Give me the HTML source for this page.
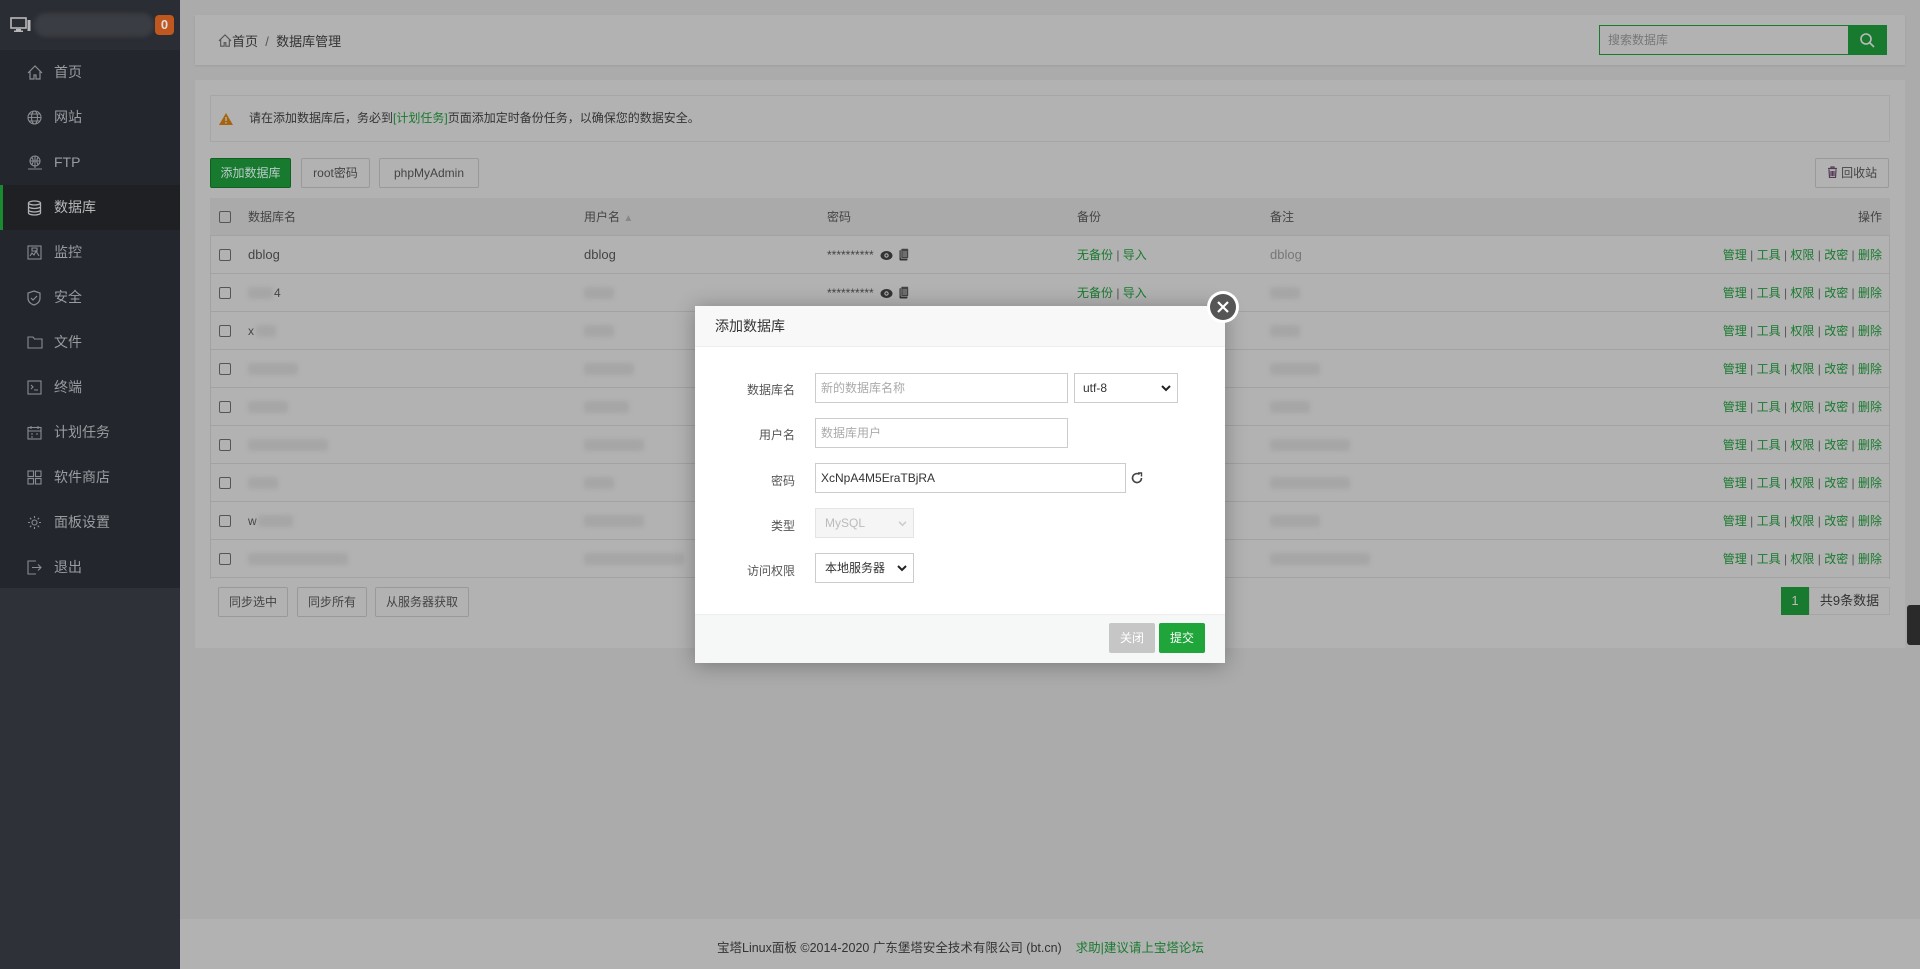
<!DOCTYPE html>
<html><head><meta charset="utf-8"><style>
*{box-sizing:border-box;margin:0;padding:0}
body{width:1920px;height:969px;overflow:hidden;background:#ababab;font-family:"Liberation Sans","Noto Sans CJK SC",sans-serif;font-size:12px;color:#444;position:relative}
.abs{position:absolute}
.side{left:0;top:0;width:180px;height:969px;background:#2e3137}
.logo{left:0;top:0;width:180px;height:50px;background:#2a2d33}
.menu{left:0;top:50px;width:180px;height:538px;background:#23262d}
.mi{position:absolute;left:0;width:180px;height:45px;color:#9a9ca0;font-size:14px;line-height:45px;padding-left:54px}
.mi svg{position:absolute;left:27px;top:15px}
.mi.act{background:#1e2024;color:#b8b8b8;border-left:3px solid #1a8a30;padding-left:51px}
.mi.act svg{left:24px}
.card{background:#b2b2b2}
.btn{position:absolute;border:1px solid #999;border-radius:2px;color:#444;text-align:center;font-size:12px;background:#b2b2b2}
.row{position:absolute;left:210px;width:1680px;height:38px;border-bottom:1px solid #a2a2a2;line-height:38px;font-size:12px}
.cb{position:absolute;left:9px;top:13px;width:12px;height:12px;border:1px solid #555;border-radius:2px}
.g{color:#187a2e}
.blur{position:absolute;top:13px;height:12px;background:#a6a6a6;border-radius:3px;filter:blur(2px)}
.ops{position:absolute;right:8px;top:0;color:#187a2e}
.ops i{font-style:normal;color:#555}
.lbl{position:absolute;width:100px;text-align:right;font-size:12px;color:#555}
.inp{position:absolute;height:30px;border:1px solid #ccc;background:#fff;font-size:12px;line-height:28px;padding-left:5px;color:#333}
.ph{color:#aaa}
.ic{display:inline-block;vertical-align:-2px;margin-left:6px}
</style></head><body>
<div class="abs side"></div>
<div class="abs logo">
<svg class="abs" style="left:10px;top:17px" width="22" height="16" viewBox="0 0 22 16"><rect x="1" y="1" width="15" height="10" fill="none" stroke="#b8b8b8" stroke-width="1.6"/><rect x="6" y="12" width="5" height="1.5" fill="#b8b8b8"/><rect x="4" y="13.5" width="9" height="1.5" fill="#b8b8b8"/><rect x="17.5" y="3" width="3" height="11" fill="#b8b8b8"/></svg>
<div class="abs" style="left:34px;top:13px;width:120px;height:24px;border-radius:12px;background:#3a3d43;filter:blur(2px)"></div>
<div class="abs" style="left:155px;top:15px;width:19px;height:20px;border-radius:4px;background:#c0571e;color:#ddd;font-weight:bold;font-size:13px;text-align:center;line-height:20px">0</div>
</div>
<div class="abs menu"></div>
<div class="mi" style="top:50px"><svg width="16" height="15" viewBox="0 0 16 15" fill="none" stroke="#8a8c90" stroke-width="1.2"><path d="M1 8L8 1l7 7M3 6.5V14h4v-4h2v4h4V6.5"/></svg>首页</div>
<div class="mi" style="top:95px"><svg width="15" height="15" viewBox="0 0 15 15" fill="none" stroke="#8a8c90" stroke-width="1.1"><circle cx="7.5" cy="7.5" r="6.5"/><ellipse cx="7.5" cy="7.5" rx="3" ry="6.5"/><path d="M1 7.5h13M2 4h11M2 11h11"/></svg>网站</div>
<div class="mi" style="top:140px"><svg width="16" height="16" viewBox="0 0 16 16" fill="none" stroke="#8a8c90" stroke-width="1.1"><circle cx="8" cy="6" r="5"/><path d="M3 6h10M8 1v10M5 2.5c1.5 2 1.5 5 0 7M11 2.5c-1.5 2-1.5 5 0 7M8 11v2M1 14h14"/></svg>FTP</div>
<div class="mi act" style="top:185px"><svg width="15" height="16" viewBox="0 0 15 16" fill="none" stroke="#b0b0b0" stroke-width="1.3"><ellipse cx="7.5" cy="3" rx="6" ry="2"/><path d="M1.5 3v10c0 1.1 2.7 2 6 2s6-.9 6-2V3M1.5 6.5c0 1.1 2.7 2 6 2s6-.9 6-2M1.5 10c0 1.1 2.7 2 6 2s6-.9 6-2"/></svg>数据库</div>
<div class="mi" style="top:230px"><svg width="15" height="15" viewBox="0 0 15 15" fill="none" stroke="#8a8c90" stroke-width="1.1"><rect x="1" y="1" width="13" height="13"/><path d="M3 11l2-3 2 2 2-4 3 5M5 3h5v3H5z"/></svg>监控</div>
<div class="mi" style="top:275px"><svg width="14" height="16" viewBox="0 0 14 16" fill="none" stroke="#8a8c90" stroke-width="1.2"><path d="M7 1l6 2v5c0 4-3 6-6 7-3-1-6-3-6-7V3z"/><path d="M4 8l2 2 4-4"/></svg>安全</div>
<div class="mi" style="top:320px"><svg width="16" height="14" viewBox="0 0 16 14" fill="none" stroke="#8a8c90" stroke-width="1.1"><path d="M1 2h5l1.5 2H15v9H1z"/></svg>文件</div>
<div class="mi" style="top:365px"><svg width="15" height="15" viewBox="0 0 15 15" fill="none" stroke="#8a8c90" stroke-width="1.1"><rect x="1" y="1" width="13" height="13"/><path d="M4 5l2 2-2 2M7 10h4"/></svg>终端</div>
<div class="mi" style="top:410px"><svg width="15" height="15" viewBox="0 0 15 15" fill="none" stroke="#8a8c90" stroke-width="1.1"><rect x="1" y="2.5" width="13" height="11.5"/><path d="M4 1v3M11 1v3M1 6h13M4 9h2M9 9h2M4 12h2"/></svg>计划任务</div>
<div class="mi" style="top:455px"><svg width="15" height="15" viewBox="0 0 15 15" fill="none" stroke="#8a8c90" stroke-width="1.1"><rect x="1" y="1" width="5.5" height="5.5"/><rect x="8.5" y="1" width="5.5" height="5.5"/><rect x="1" y="8.5" width="5.5" height="5.5"/><rect x="8.5" y="8.5" width="5.5" height="5.5"/></svg>软件商店</div>
<div class="mi" style="top:500px"><svg width="15" height="15" viewBox="0 0 15 15" fill="none" stroke="#8a8c90" stroke-width="1.1"><circle cx="7.5" cy="7.5" r="2.5"/><path d="M7.5 1v2M7.5 12v2M1 7.5h2M12 7.5h2M2.9 2.9l1.4 1.4M10.7 10.7l1.4 1.4M2.9 12.1l1.4-1.4M10.7 4.3l1.4-1.4"/></svg>面板设置</div>
<div class="mi" style="top:545px"><svg width="15" height="15" viewBox="0 0 15 15" fill="none" stroke="#8a8c90" stroke-width="1.1"><path d="M9 1H1v13h8M5 7.5h9M11 4.5l3 3-3 3"/></svg>退出</div>

<div class="abs card" style="left:195px;top:15px;width:1710px;height:50px;box-shadow:0 1px 2px rgba(0,0,0,.08)"></div>
<div class="abs" style="left:218px;top:31px;font-size:13px;color:#333"><svg width="14" height="13" viewBox="0 0 16 15" fill="none" stroke="#555" stroke-width="1.3" style="vertical-align:-1px"><path d="M1 8L8 1l7 7M3 6.5V14h4v-4h2v4h4V6.5"/></svg>首页 &nbsp;<span style="color:#555">/</span>&nbsp; 数据库管理</div>
<div class="abs" style="left:1599px;top:25px;width:250px;height:30px;border:1px solid #187a2e;background:#b2b2b2;color:#777;line-height:28px;padding-left:8px;font-size:12px">搜索数据库</div>
<div class="abs" style="left:1848px;top:25px;width:39px;height:30px;background:#187a2e"><svg class="abs" style="left:12px;top:8px" width="15" height="15" viewBox="0 0 15 15" fill="none" stroke="#bbb" stroke-width="1.6"><circle cx="6" cy="6" r="5"/><path d="M10 10l4 4"/></svg></div>

<div class="abs card" style="left:195px;top:80px;width:1710px;height:568px"></div>
<div class="abs" style="left:210px;top:95px;width:1680px;height:47px;border:1px solid #a6a6a6;line-height:45px;padding-left:38px;color:#333">请在添加数据库后，务必到<span class="g">[计划任务]</span>页面添加定时备份任务，以确保您的数据安全。</div>
<svg class="abs" style="left:219px;top:113px" width="14" height="12" viewBox="0 0 14 12"><path d="M7 0L14 12H0z" fill="#a6650c"/><rect x="6.3" y="4" width="1.4" height="4" fill="#b2b2b2"/><rect x="6.3" y="9" width="1.4" height="1.4" fill="#b2b2b2"/></svg>
<div class="btn" style="left:210px;top:158px;width:81px;height:30px;line-height:28px;background:#187a2e;border-color:#106020;color:#bcc">添加数据库</div>
<div class="btn" style="left:301px;top:158px;width:69px;height:30px;line-height:28px">root密码</div>
<div class="btn" style="left:379px;top:158px;width:100px;height:30px;line-height:28px">phpMyAdmin</div>
<div class="btn" style="left:1815px;top:158px;width:74px;height:30px;line-height:28px"><svg width="11" height="12" viewBox="0 0 11 12" style="vertical-align:-1px" fill="none" stroke="#553a55" stroke-width="1.2"><path d="M1 2.5h9M4 2.5V1h3v1.5M2 3.5l.5 8h6l.5-8M4 5v5M5.5 5v5M7 5v5"/></svg> 回收站</div>

<div class="abs" style="left:210px;top:198px;width:1680px;height:381px;border:1px solid #a2a2a2;border-bottom:none"></div>
<div class="row" style="top:198px;background:#aaaaaa;color:#444"><div class="cb"></div><span class="abs" style="left:38px">数据库名</span><span class="abs" style="left:374px">用户名 <span style="color:#888;font-size:10px">▲</span></span><span class="abs" style="left:617px">密码</span><span class="abs" style="left:867px">备份</span><span class="abs" style="left:1060px">备注</span><span class="abs" style="right:8px">操作</span></div>
<div class="row" style="top:236px"><div class="cb"></div><span class="abs" style="left:38px;font-size:13px">dblog</span><span class="abs" style="left:374px;font-size:13px">dblog</span><span class="abs" style="left:617px">**********<svg class="ic" width="13" height="11" viewBox="0 0 13 11"><ellipse cx="6.5" cy="5.5" rx="6" ry="4.5" fill="#333"/><circle cx="6.5" cy="5.5" r="2.2" fill="#b2b2b2"/><circle cx="6.5" cy="5.5" r="1.1" fill="#333"/></svg><svg class="ic" width="10" height="13" viewBox="0 0 10 13"><rect x="0.5" y="2" width="8" height="10.5" rx="1" fill="#333"/><rect x="2" y="0.5" width="7.5" height="10" rx="1" fill="#444" stroke="#b2b2b2" stroke-width=".6"/><path d="M3.5 4h4.5M3.5 6h4.5M3.5 8h4.5" stroke="#b2b2b2" stroke-width=".8"/></svg></span><span class="abs g" style="left:867px">无备份 <i style="font-style:normal;color:#555">|</i> 导入</span><span class="abs" style="left:1060px;color:#777;font-size:13px">dblog</span><span class="ops">管理 <i>|</i> 工具 <i>|</i> 权限 <i>|</i> 改密 <i>|</i> 删除</span></div>
<div class="row" style="top:274px"><div class="cb"></div><div class="blur" style="left:38px;width:25px"></div><span class="abs" style="left:64px">4</span><div class="blur" style="left:374px;width:30px"></div><span class="abs" style="left:617px">**********<svg class="ic" width="13" height="11" viewBox="0 0 13 11"><ellipse cx="6.5" cy="5.5" rx="6" ry="4.5" fill="#333"/><circle cx="6.5" cy="5.5" r="2.2" fill="#b2b2b2"/><circle cx="6.5" cy="5.5" r="1.1" fill="#333"/></svg><svg class="ic" width="10" height="13" viewBox="0 0 10 13"><rect x="0.5" y="2" width="8" height="10.5" rx="1" fill="#333"/><rect x="2" y="0.5" width="7.5" height="10" rx="1" fill="#444" stroke="#b2b2b2" stroke-width=".6"/><path d="M3.5 4h4.5M3.5 6h4.5M3.5 8h4.5" stroke="#b2b2b2" stroke-width=".8"/></svg></span><span class="abs g" style="left:867px">无备份 <i style="font-style:normal;color:#555">|</i> 导入</span><div class="blur" style="left:1060px;width:30px"></div><span class="ops">管理 <i>|</i> 工具 <i>|</i> 权限 <i>|</i> 改密 <i>|</i> 删除</span></div>
<div class="row" style="top:312px"><div class="cb"></div><span class="abs" style="left:38px">x</span><div class="blur" style="left:46px;width:20px"></div><div class="blur" style="left:374px;width:30px"></div><div class="blur" style="left:1060px;width:30px"></div><span class="ops">管理 <i>|</i> 工具 <i>|</i> 权限 <i>|</i> 改密 <i>|</i> 删除</span></div>
<div class="row" style="top:350px"><div class="cb"></div><div class="blur" style="left:38px;width:50px"></div><div class="blur" style="left:374px;width:50px"></div><div class="blur" style="left:1060px;width:50px"></div><span class="ops">管理 <i>|</i> 工具 <i>|</i> 权限 <i>|</i> 改密 <i>|</i> 删除</span></div>
<div class="row" style="top:388px"><div class="cb"></div><div class="blur" style="left:38px;width:40px"></div><div class="blur" style="left:374px;width:45px"></div><div class="blur" style="left:1060px;width:40px"></div><span class="ops">管理 <i>|</i> 工具 <i>|</i> 权限 <i>|</i> 改密 <i>|</i> 删除</span></div>
<div class="row" style="top:426px"><div class="cb"></div><div class="blur" style="left:38px;width:80px"></div><div class="blur" style="left:374px;width:60px"></div><div class="blur" style="left:1060px;width:80px"></div><span class="ops">管理 <i>|</i> 工具 <i>|</i> 权限 <i>|</i> 改密 <i>|</i> 删除</span></div>
<div class="row" style="top:464px"><div class="cb"></div><div class="blur" style="left:38px;width:30px"></div><div class="blur" style="left:374px;width:30px"></div><div class="blur" style="left:1060px;width:80px"></div><span class="ops">管理 <i>|</i> 工具 <i>|</i> 权限 <i>|</i> 改密 <i>|</i> 删除</span></div>
<div class="row" style="top:502px"><div class="cb"></div><span class="abs" style="left:38px">w</span><div class="blur" style="left:48px;width:35px"></div><div class="blur" style="left:374px;width:60px"></div><div class="blur" style="left:1060px;width:50px"></div><span class="ops">管理 <i>|</i> 工具 <i>|</i> 权限 <i>|</i> 改密 <i>|</i> 删除</span></div>
<div class="row" style="top:540px"><div class="cb"></div><div class="blur" style="left:38px;width:100px"></div><div class="blur" style="left:374px;width:100px"></div><div class="blur" style="left:1060px;width:100px"></div><span class="ops">管理 <i>|</i> 工具 <i>|</i> 权限 <i>|</i> 改密 <i>|</i> 删除</span></div>

<div class="btn" style="left:218px;top:587px;width:70px;height:30px;line-height:28px">同步选中</div>
<div class="btn" style="left:297px;top:587px;width:70px;height:30px;line-height:28px">同步所有</div>
<div class="btn" style="left:375px;top:587px;width:94px;height:30px;line-height:28px">从服务器获取</div>
<div class="abs" style="left:1781px;top:587px;width:28px;height:28px;background:#187a2e;color:#bbb;text-align:center;line-height:28px;font-size:13px">1</div>
<div class="abs" style="left:1809px;top:587px;width:81px;height:28px;border:1px solid #a6a6a6;text-align:center;line-height:26px;font-size:13px;color:#333">共9条数据</div>

<div class="abs" style="left:180px;top:919px;width:1740px;height:50px;background:#b2b2b2"></div>
<div class="abs" style="left:717px;top:937px;font-size:12.5px;color:#333">宝塔Linux面板 ©2014-2020 广东堡塔安全技术有限公司 (bt.cn) &nbsp;&nbsp;&nbsp;<span class="g">求助|建议请上宝塔论坛</span></div>
<div class="abs" style="left:1907px;top:605px;width:13px;height:40px;background:#2a2a2a;border-radius:3px 0 0 3px"></div>

<div class="abs" style="left:695px;top:306px;width:530px;height:357px;background:#fff;box-shadow:0 2px 20px rgba(0,0,0,.3)"></div>
<div class="abs" style="left:695px;top:306px;width:530px;height:41px;background:#f8f8f8;border-bottom:1px solid #eee;line-height:41px;padding-left:20px;font-size:14px;color:#333">添加数据库</div>
<div class="abs" style="left:1207px;top:291px;width:32px;height:32px;border-radius:50%;background:#fff"></div>
<div class="abs" style="left:1210px;top:294px;width:26px;height:26px;border-radius:50%;background:#555"><svg class="abs" style="left:7px;top:7px" width="12" height="12" viewBox="0 0 12 12" stroke="#fff" stroke-width="2.2"><path d="M1 1l10 10M11 1L1 11"/></svg></div>
<div class="lbl" style="left:695px;top:381px">数据库名</div>
<div class="inp ph" style="left:815px;top:373px;width:253px">新的数据库名称</div>
<div class="inp" style="left:1074px;top:373px;width:104px;padding-left:8px">utf-8<svg class="abs" style="right:6px;top:11px" width="10" height="7" viewBox="0 0 10 7" fill="none" stroke="#222" stroke-width="2"><path d="M1 1l4 4 4-4"/></svg></div>
<div class="lbl" style="left:695px;top:426px">用户名</div>
<div class="inp ph" style="left:815px;top:418px;width:253px">数据库用户</div>
<div class="lbl" style="left:695px;top:472px">密码</div>
<div class="inp" style="left:815px;top:463px;width:311px">XcNpA4M5EraTBjRA</div>
<svg class="abs" style="left:1131px;top:472px" width="12" height="12" viewBox="0 0 12 12" fill="none" stroke="#444" stroke-width="1.6"><path d="M10.5 6A4.5 4.5 0 1 1 8.5 2.3"/><path d="M7 1h3.5v3.5" stroke-width="1.4"/></svg>
<div class="lbl" style="left:695px;top:517px">类型</div>
<div class="inp" style="left:815px;top:508px;width:99px;background:#f5f5f5;border-color:#e4e4e4;color:#bbb;padding-left:9px">MySQL<svg class="abs" style="right:6px;top:12px" width="9" height="6" viewBox="0 0 10 7" fill="none" stroke="#ccc" stroke-width="1.8"><path d="M1 1l4 4 4-4"/></svg></div>
<div class="lbl" style="left:695px;top:562px">访问权限</div>
<div class="inp" style="left:815px;top:553px;width:99px;padding-left:9px">本地服务器<svg class="abs" style="right:6px;top:11px" width="10" height="7" viewBox="0 0 10 7" fill="none" stroke="#222" stroke-width="2"><path d="M1 1l4 4 4-4"/></svg></div>
<div class="abs" style="left:695px;top:614px;width:530px;height:49px;background:#f6f8f8;border-top:1px solid #eee"></div>
<div class="abs" style="left:1109px;top:623px;width:46px;height:30px;background:#c6c6c6;color:#fff;text-align:center;line-height:30px;border-radius:2px">关闭</div>
<div class="abs" style="left:1159px;top:623px;width:46px;height:30px;background:#20a53a;color:#fff;text-align:center;line-height:30px;border-radius:2px">提交</div>
</body></html>
